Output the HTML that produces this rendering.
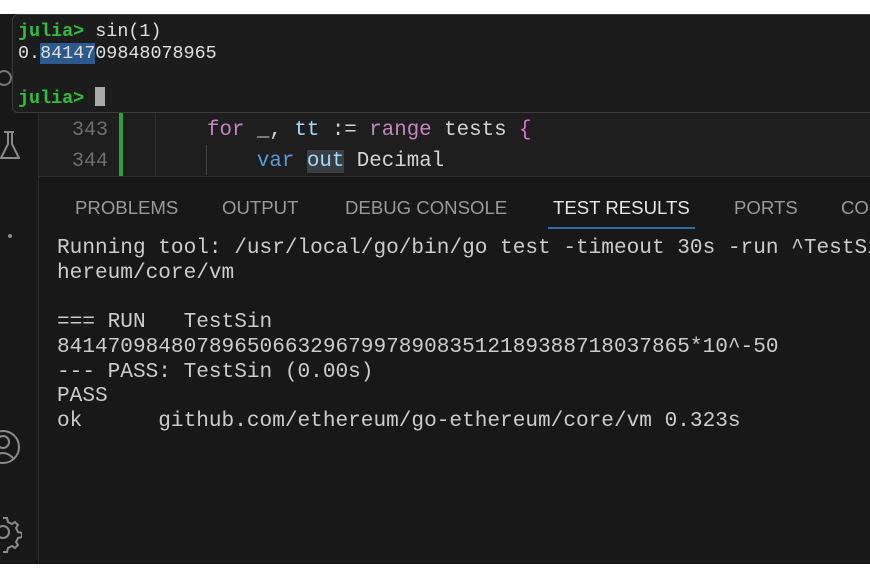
<!DOCTYPE html><html><head><style>
body{margin:0;width:870px;height:580px;background:#fff;position:relative;overflow:hidden;font-family:"Liberation Mono",monospace}
.a{position:absolute}
.m{font-family:"Liberation Mono",monospace;white-space:pre}
.tab{position:absolute;top:197px;font-family:"Liberation Sans",sans-serif;font-size:18.6px;color:#9a9a9a}
</style></head><body>
<div class="a" style="left:0;top:14px;width:870px;height:550px;background:#181818"></div>
<div class="a" style="left:38px;top:14px;width:1px;height:550px;background:#2a2a2a"></div>
<div class="a" style="left:39px;top:112px;width:831px;height:64px;background:#1e1e1e"></div>
<div class="a" style="left:39px;top:176px;width:831px;height:1px;background:#2e2e2e"></div>
<div class="a" style="left:119px;top:112px;width:4px;height:64px;background:#2ea043"></div>
<div class="a" style="left:155px;top:112px;width:1px;height:64px;background:#2e2e2e"></div>
<div class="a" style="left:206px;top:145px;width:1px;height:30px;background:#444"></div>
<div class="a m" style="left:72px;top:115px;font-size:20px;color:#6e6e6e;line-height:31px">343
344</div>
<div class="a m" style="left:207px;top:115px;font-size:20.8px;line-height:31px;color:#d4d4d4"><span style="color:#c586c0">for</span> _, <span style="color:#9cdcfe">tt</span> := <span style="color:#c586c0">range</span> tests <span style="color:#da70d6">{</span>
    <span style="color:#569cd6">var</span> <span style="color:#9cdcfe;background:#3a3d41">out</span> Decimal</div>
<svg class="a" style="left:0;top:130px" width="20" height="45"><path d="M4 2h10M8 2v12L1 28h18L12 14V2" fill="none" stroke="#8a8a8a" stroke-width="2"/></svg>
<div class="a" style="left:8px;top:234px;width:4px;height:4px;border-radius:2px;background:#8a8a8a"></div>
<svg class="a" style="left:0;top:425px" width="22" height="45"><circle cx="3" cy="22" r="16" fill="none" stroke="#8a8a8a" stroke-width="2"/><circle cx="3" cy="17" r="6" fill="none" stroke="#8a8a8a" stroke-width="2"/><path d="M-8 34q11-12 22 0" fill="none" stroke="#8a8a8a" stroke-width="2"/></svg>
<svg class="a" style="left:0;top:510px" width="22" height="45"><circle cx="3" cy="22" r="6" fill="none" stroke="#8a8a8a" stroke-width="2"/><path d="M3 8l4 0 1 4 4 2 3-2 3 3-2 3 2 4 4 1v4l-4 1-2 4 2 3-3 3-3-2-4 2-1 4h-4" fill="none" stroke="#8a8a8a" stroke-width="2"/></svg>
<div class="tab" style="left:75px">PROBLEMS</div>
<div class="tab" style="left:222px">OUTPUT</div>
<div class="tab" style="left:345px">DEBUG CONSOLE</div>
<div class="tab" style="left:553px;color:#e6e6e6">TEST RESULTS</div>
<div class="tab" style="left:734px">PORTS</div>
<div class="tab" style="left:841px">CO</div>
<div class="a" style="left:548px;top:227px;width:147px;height:2px;background:#2f6eae"></div>
<div class="a m" style="left:57px;top:236px;font-size:21.1px;line-height:24.7px;color:#cccccc">Running tool: /usr/local/go/bin/go test -timeout 30s -run ^TestSin
hereum/core/vm

=== RUN   TestSin
84147098480789650663296799789083512189388718037865*10^-50
--- PASS: TestSin (0.00s)
PASS
ok      github.com/ethereum/go-ethereum/core/vm 0.323s</div>
<div class="a" style="left:12px;top:14px;width:870px;height:97px;background:#1c1c1c;border:1px solid #3c3c3c;border-radius:6px"></div>
<svg class="a" style="left:0;top:68px" width="12" height="20"><circle cx="4" cy="10" r="7" fill="none" stroke="#777" stroke-width="2"/></svg>
<div class="a m" style="left:18px;top:21px;font-size:18.4px;line-height:22px;color:#e0e0e0;font-weight:bold"><span style="color:#2fbf3a">julia&gt;</span><span style="font-weight:normal"> sin(1)
0.<span style="background:#2d5a8c">84147</span>09848078965</span>

<span style="color:#2fbf3a">julia&gt;</span> <span style="display:inline-block;width:10px;height:19px;background:#aaa;vertical-align:-3px"></span></div>
</body></html>
